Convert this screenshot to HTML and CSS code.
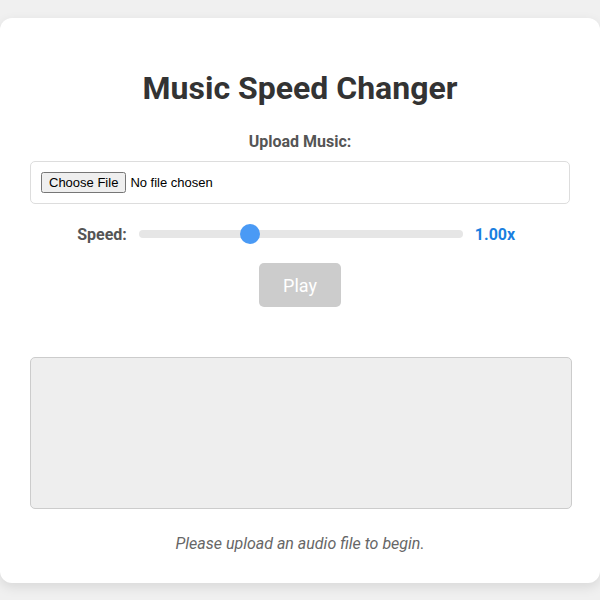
FILE: index.html
```html
<!DOCTYPE html>
<html lang="en">
<head>
  <meta charset="UTF-8">
  <meta name="viewport" content="width=device-width, initial-scale=1.0">
  <title>Music Speed Changer</title>
  <link rel="stylesheet" href="styles.css">
</head>
<body>
<div class="container">
  <h1>Music Speed Changer</h1>

  <label for="audioFile" class="upload-label">Upload Music:</label>
  <div class="file-box">
    <input type="file" id="audioFile" accept="audio/*">
  </div>

  <div class="speed-row">
    <label for="speed" class="speed-label">Speed:</label>
    <input type="range" id="speed" min="0.5" max="2" step="0.05" value="1">
    <span class="speed-value" id="speedValue">1.00x</span>
  </div>

  <div class="controls">
    <button class="play-button" id="playBtn" disabled>Play</button>
  </div>

  <canvas id="visualizer" height="150"></canvas>

  <p class="status" id="status">Please upload an audio file to begin.</p>
</div>
</body>
</html>
```

FILE: styles.css
```css
body {
  font-family: Roboto, "Liberation Sans", Arial, sans-serif;
  margin: 0;
  padding: 18px 0;
  background-color: #f0f0f0;
}

.container {
  max-width: 600px;
  box-sizing: border-box;
  margin: 0 auto;
  padding: 30px;
  background: white;
  border-radius: 12px;
  box-shadow: 0 4px 12px rgba(0, 0, 0, 0.1);
  text-align: center;
}

h1 {
  font-size: 32px;
  color: #333;
  margin: 21px 0 25px;
}

.upload-label {
  display: block;
  font-weight: bold;
  font-size: 16px;
  color: #555;
  margin-bottom: 10px;
}

.file-box {
  border: 1px solid #ddd;
  border-radius: 5px;
  padding: 10px;
  text-align: left;
}

.file-box input {
  font-size: 13px;
}

.speed-row {
  display: flex;
  justify-content: center;
  align-items: center;
  gap: 12px;
  margin-top: 20px;
  padding-left: 2px;
}

.speed-label {
  font-weight: bold;
  font-size: 16px;
  color: #555;
}

.speed-value {
  font-weight: bold;
  font-size: 16px;
  color: #1a7fe0;
  width: 50px;
  text-align: left;
}

input[type="range"] {
  -webkit-appearance: none;
  appearance: none;
  width: 324px;
  height: 8px;
  margin: 6px 0;
  background: #e6e6e6;
  border-radius: 4px;
  outline: none;
}

input[type="range"]::-webkit-slider-thumb {
  -webkit-appearance: none;
  width: 20px;
  height: 20px;
  border-radius: 50%;
  background: #4a9af5;
  cursor: pointer;
}

.controls {
  margin-top: 19px;
}

.play-button {
  font-family: inherit;
  font-size: 18px;
  color: white;
  background: #ccc;
  border: none;
  border-radius: 5px;
  padding: 12px 24px 11px;
  cursor: pointer;
}

.play-button:disabled {
  cursor: not-allowed;
}

canvas {
  display: block;
  width: 100%;
  height: 150px;
  margin-top: 50px;
  background: #eee;
  border: 1px solid #ccc;
  border-radius: 5px;
}

.status {
  font-style: italic;
  color: #666;
  font-size: 16px;
  margin: 25px 0 0;
}
```
